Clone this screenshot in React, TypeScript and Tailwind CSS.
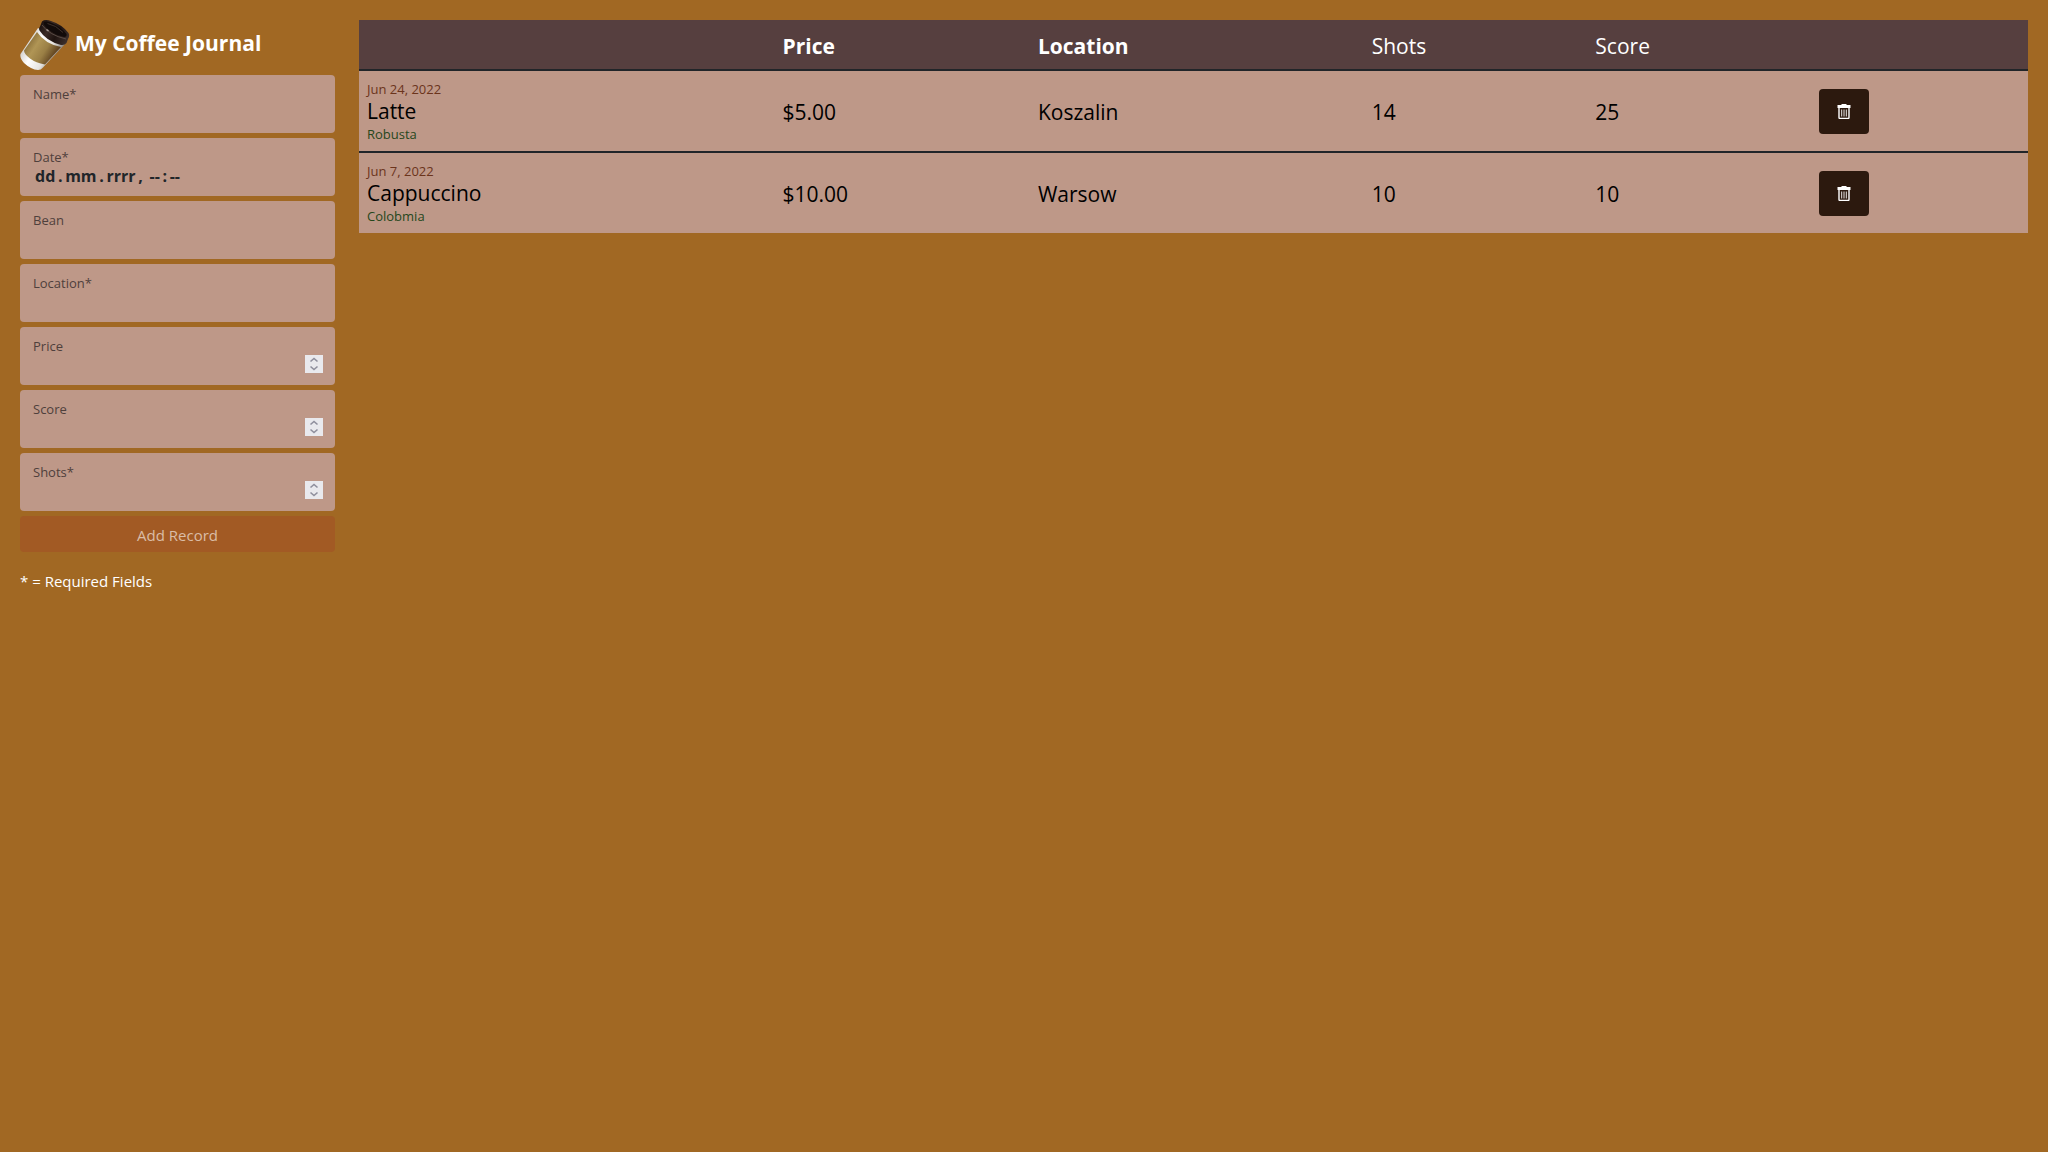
import React from "react";

type Field = { id: string; label: string; type: "text" | "date" | "number" };

const fields: Field[] = [
  { id: "name", label: "Name*", type: "text" },
  { id: "date", label: "Date*", type: "date" },
  { id: "bean", label: "Bean", type: "text" },
  { id: "location", label: "Location*", type: "text" },
  { id: "price", label: "Price", type: "number" },
  { id: "score", label: "Score", type: "number" },
  { id: "shots", label: "Shots*", type: "number" },
];

const records = [
  { date: "Jun 24, 2022", name: "Latte", bean: "Robusta", price: "$5.00", location: "Koszalin", shots: 14, score: 25 },
  { date: "Jun 7, 2022", name: "Cappuccino", bean: "Colobmia", price: "$10.00", location: "Warsow", shots: 10, score: 10 },
];

function CoffeeCup() {
  return (
    <svg className="size-[50px] shrink-0" viewBox="0 0 50 50" aria-hidden="true">
      <defs>
        <linearGradient id="paper" gradientUnits="userSpaceOnUse" x1="8" y1="22" x2="36" y2="38">
          <stop offset="0" stopColor="#d8d6d2" />
          <stop offset="0.3" stopColor="#ffffff" />
          <stop offset="0.7" stopColor="#e6e4e0" />
          <stop offset="1" stopColor="#8f8b86" />
        </linearGradient>
        <linearGradient id="sleeve" gradientUnits="userSpaceOnUse" x1="9" y1="20" x2="34" y2="36">
          <stop offset="0" stopColor="#8a6f3a" />
          <stop offset="0.3" stopColor="#b09555" />
          <stop offset="0.65" stopColor="#9a7f45" />
          <stop offset="1" stopColor="#5f4220" />
        </linearGradient>
        <linearGradient id="lid" gradientUnits="userSpaceOnUse" x1="20" y1="5" x2="48" y2="20">
          <stop offset="0" stopColor="#1c1210" />
          <stop offset="0.3" stopColor="#3a2b26" />
          <stop offset="0.6" stopColor="#1f1411" />
          <stop offset="1" stopColor="#3d302c" />
        </linearGradient>
      </defs>
      <path d="M18 8 L0.500 34 Q-0.500 38 4 43 Q11 49.500 18 50 Q21 50 23 47.500 L46 23 Z" fill="url(#paper)" />
      <path d="M17 12 L4 30.500 Q4 34 10 38.500 Q16 43 25 44.500 L41 27 Q25 24 17 12 Z" fill="url(#sleeve)" />
      <path d="M22 1.500 Q25 -1 31 1 Q42 4.500 48.500 13 Q50 16 48 19 L46.500 23 Q45 25.500 41 25 Q26 21 19.500 10.500 Q18.500 8.500 20 6.500 Z" fill="url(#lid)" />
      <path d="M24 2 Q27 0.500 32 3 Q41 7 46.500 14 Q47 17 44 17 Q33 14.500 26 7.500 Q23 4 24 2 Z" fill="#120b0a" />
      <path d="M22 5 Q29 15 46 19" fill="none" stroke="#5d504b" strokeWidth="0.900" />
      <path d="M27.500 3.500 Q36 5 43 12.500" fill="none" stroke="#43352f" strokeWidth="0.900" />
      <path d="M26.500 9.500 l2 1.500" stroke="#a79d97" strokeWidth="1.500" />
    </svg>
  );
}

function TrashIcon() {
  return (
    <svg className="h-[15px] w-[14px]" viewBox="0 0 14 15" aria-hidden="true">
      <path d="M4.500 0h5v1h4v3H.5V1h4z" fill="#fff" />
      <path d="M2 4v9.500q0 1 1 1h8q1 0 1-1V4" fill="none" stroke="#fff" strokeWidth="1.400" />
      <path d="M4.700 5.500v7M7 5.500v7M9.300 5.500v7" stroke="#fff" strokeWidth="0.900" />
    </svg>
  );
}

function Spinner() {
  return (
    <span className="pointer-events-none absolute right-3 bottom-3 flex size-[18px] items-center justify-center bg-[#e9e9ed]">
      <svg className="h-[14px] w-[10px]" viewBox="0 0 10 14" fill="none" stroke="#8f8f9d" strokeWidth="1.600" aria-hidden="true">
        <path d="M1.500 4.500 5 1.500 8.500 4.500M1.500 9.500 5 12.500 8.500 9.500" />
      </svg>
    </span>
  );
}

function FormField({ field }: { field: Field }) {
  return (
    <div className="relative flex h-[58px] flex-col rounded-[4px] bg-[#be9888] px-[13px] pt-[9px]">
      <label htmlFor={field.id} className="text-[13px] leading-5 text-[#4f403c]">
        {field.label}
      </label>
      <input
        id={field.id}
        type={field.type === "number" ? "number" : "text"}
        placeholder={field.type === "date" ? "dd\u2009.\u2009mm\u2009.\u2009rrrr\u2009,\u2009 --\u2009:\u2009--" : undefined}
        className="h-[18px] w-full appearance-none bg-transparent px-[2px] text-base leading-[18px] font-bold text-[#212529] outline-none [-moz-appearance:textfield] placeholder:text-[#212529] placeholder:opacity-100 [&::-webkit-inner-spin-button]:appearance-none"
      />
      {field.type === "number" && <Spinner />}
    </div>
  );
}

export default function App() {
  return (
    <main className="flex min-h-screen items-start gap-6 bg-[#a16823] p-5 font-['Open_Sans',sans-serif]">
      <aside className="w-[315px] shrink-0">
        <form className="flex flex-col gap-[5px]" onSubmit={(e) => e.preventDefault()}>
          <header className="flex items-center gap-[5px]">
            <CoffeeCup />
            <h1 className="pb-1 text-[21px] leading-6 font-bold whitespace-nowrap text-white">My Coffee Journal</h1>
          </header>
          {fields.map((f) => (
            <FormField key={f.id} field={f} />
          ))}
          <button type="submit" className="h-9 rounded-[4px] bg-[#a25a24] pt-px text-[15px] leading-6 text-[#dabda7]">
            Add Record
          </button>
        </form>
        <p className="mt-[17px] text-[15px] leading-6 text-white">* = Required Fields</p>
      </aside>

      <div className="min-w-0 flex-1">
        <table className="w-full table-fixed border-collapse bg-[#be9888] text-left text-[21px] leading-8 text-black">
          <thead>
            <tr className="h-[50px] bg-[#563f3f] text-white">
              <th className="w-[24.9%] px-2" />
              <th className="w-[15.3%] px-2 pt-0.5 font-bold">Price</th>
              <th className="w-[20%] px-2 pt-0.5 font-bold">Location</th>
              <th className="w-[13.4%] px-2 pt-0.5 font-normal">Shots</th>
              <th className="w-[13.4%] px-2 pt-0.5 font-normal">Score</th>
              <th className="w-[13%] px-2" />
            </tr>
          </thead>
          <tbody>
            {records.map((r) => (
              <tr key={r.name} className="h-[82px] border-t-2 border-[#212529] last:h-[81px]">
                <td className="px-2 pt-px">
                  <div className="text-[13px] leading-5 font-medium text-[#6b341c]">{r.date}</div>
                  <div className="leading-6">{r.name}</div>
                  <div className="text-[13px] leading-[22px] font-medium text-[#26471c]">{r.bean}</div>
                </td>
                <td className="px-2 pt-px">{r.price}</td>
                <td className="px-2 pt-px">{r.location}</td>
                <td className="px-2 pt-px">{r.shots}</td>
                <td className="px-2 pt-px">{r.score}</td>
                <td className="px-2">
                  <button
                    type="button"
                    aria-label={`Delete ${r.name}`}
                    className="flex h-[45px] w-[50px] items-center justify-center rounded-[4px] bg-[#2c190e]"
                  >
                    <TrashIcon />
                  </button>
                </td>
              </tr>
            ))}
          </tbody>
        </table>
      </div>
    </main>
  );
}
